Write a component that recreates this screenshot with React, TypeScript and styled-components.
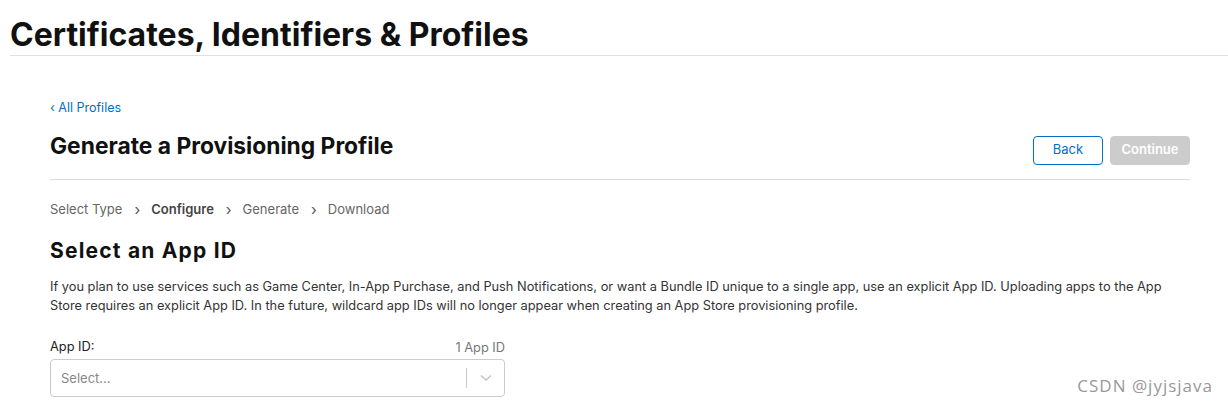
import styled, { createGlobalStyle } from 'styled-components';

const GlobalStyle = createGlobalStyle`
  html, body {
    margin: 0;
    padding: 0;
    background: #fff;
  }
  body {
    font-family: Inter, "Liberation Sans", sans-serif;
    color: #333;
    -webkit-font-smoothing: antialiased;
  }
  * { box-sizing: border-box; }
`;

const Page = styled.div`
  width: 1228px;
  height: 406px;
  overflow: hidden;
  position: relative;
`;

const TopBar = styled.header`
  margin-left: 10px;
  padding-top: 16px;
  height: 56px;
  border-bottom: 1px solid #e0e0e0;
`;

const SiteTitle = styled.h1`
  margin: 0;
  font-size: 32px;
  line-height: 38px;
  font-weight: 700;
  color: #111;
`;

const Main = styled.main`
  width: 1140px;
  margin: 0 0 0 50px;
  padding-top: 44px;
`;

const BackLink = styled.a`
  display: block;
  width: max-content;
  font-size: 12.5px;
  line-height: 16px;
  color: #0070c9;
  text-decoration: none;
`;

const HeaderRow = styled.div`
  display: flex;
  justify-content: space-between;
  align-items: flex-start;
  height: 64px;
  border-bottom: 1px solid #dcdcdc;
`;

const PageTitle = styled.h2`
  margin: 15px 0 0;
  font-size: 22.8px;
  line-height: 30px;
  font-weight: 700;
  color: #111;
`;

const Actions = styled.div`
  display: flex;
  gap: 7px;
  margin-top: 20px;
`;

const Button = styled.button<{ $primary?: boolean }>`
  height: 29px;
  border-radius: 4px;
  font-family: inherit;
  font-size: 13px;
  padding: 0 0 3px;
  width: ${(p) => (p.$primary ? '80px' : '70px')};
  border: 1px solid ${(p) => (p.$primary ? '#cccccc' : '#0070c9')};
  background: ${(p) => (p.$primary ? '#cccccc' : '#fff')};
  color: ${(p) => (p.$primary ? '#fff' : '#0070c9')};
  font-weight: ${(p) => (p.$primary ? 600 : 400)};
`;

const Steps = styled.ol`
  display: flex;
  align-items: center;
  list-style: none;
  margin: 0;
  padding: 20px 0 0;
  font-size: 13px;
  line-height: 18px;
`;

const Step = styled.li<{ $active?: boolean }>`
  display: flex;
  align-items: center;
  color: ${(p) => (p.$active ? '#444' : '#666')};
  font-weight: ${(p) => (p.$active ? 600 : 400)};
`;

const Chevron = styled.span`
  display: inline-block;
  margin: 0 11px 0 12px;
  color: #555;
  font-size: 15px;
  font-weight: 400;
  transform: translateY(1px);
`;

const SectionTitle = styled.h3`
  margin: 21px 0 0;
  font-size: 21px;
  line-height: 24px;
  font-weight: 700;
  color: #111;
  letter-spacing: 1.2px;
`;

const Description = styled.p`
  margin: 14px 0 0;
  font-size: 12.8px;
  line-height: 19px;
  color: #333;
`;

const Field = styled.div`
  width: 455px;
  margin-top: 24px;
`;

const FieldHeader = styled.div`
  display: flex;
  justify-content: space-between;
  align-items: center;
  font-size: 12.8px;
  line-height: 16px;
`;

const Label = styled.label`
  color: #222;
`;

const Count = styled.span`
  color: #777;
  transform: translateY(1px);
`;

const SelectBox = styled.div`
  margin-top: 4px;
  height: 38px;
  border: 1px solid #ccc;
  border-radius: 4px;
  display: flex;
  align-items: center;
`;

const Placeholder = styled.span`
  flex: 1;
  padding-left: 10px;
  font-size: 13px;
  color: #888;
`;

const Separator = styled.span`
  width: 1px;
  height: 20px;
  background: #ccc;
`;

const Indicator = styled.span`
  width: 37px;
  display: flex;
  justify-content: center;
  align-items: center;
`;

const Watermark = styled.div`
  position: absolute;
  right: 15px;
  bottom: 9px;
  font-family: "Open Sans", "Noto Sans", sans-serif;
  font-size: 17px;
  line-height: 22px;
  color: #999;
  letter-spacing: 1px;
`;

export default function App() {
  return (
    <Page>
      <GlobalStyle />
      <TopBar>
        <SiteTitle>Certificates, Identifiers &amp; Profiles</SiteTitle>
      </TopBar>
      <Main>
        <BackLink href="#">‹ All Profiles</BackLink>
        <HeaderRow>
          <PageTitle>Generate a Provisioning Profile</PageTitle>
          <Actions>
            <Button type="button">Back</Button>
            <Button type="button" $primary disabled>
              Continue
            </Button>
          </Actions>
        </HeaderRow>
        <Steps>
          <Step>Select Type</Step>
          <Chevron>›</Chevron>
          <Step $active>Configure</Step>
          <Chevron>›</Chevron>
          <Step>Generate</Step>
          <Chevron>›</Chevron>
          <Step>Download</Step>
        </Steps>
        <SectionTitle>Select an App ID</SectionTitle>
        <Description>
          If you plan to use services such as Game Center, In-App Purchase, and Push Notifications, or
          want a Bundle ID unique to a single app, use an explicit App ID. Uploading apps to the App
          Store requires an explicit App ID. In the future, wildcard app IDs will no longer appear when
          creating an App Store provisioning profile.
        </Description>
        <Field>
          <FieldHeader>
            <Label>App ID:</Label>
            <Count>1 App ID</Count>
          </FieldHeader>
          <SelectBox>
            <Placeholder>Select...</Placeholder>
            <Separator />
            <Indicator>
              <svg width="12" height="8" viewBox="0 0 12 8" fill="none">
                <path d="M1 1.5 L6 6 L11 1.5" stroke="#c4c4c4" strokeWidth="1.4" />
              </svg>
            </Indicator>
          </SelectBox>
        </Field>
      </Main>
      <Watermark>CSDN @jyjsjava</Watermark>
    </Page>
  );
}
